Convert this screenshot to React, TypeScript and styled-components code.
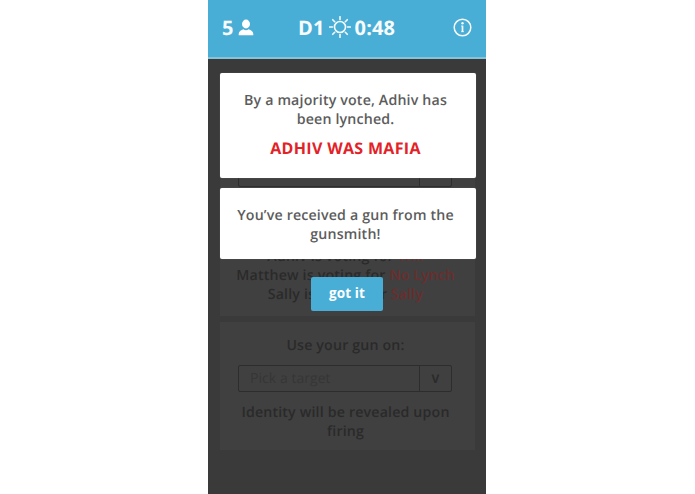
import React from "react";
import styled, { createGlobalStyle } from "styled-components";

const GlobalStyle = createGlobalStyle`
  * { box-sizing: border-box; }
  body { margin: 0; background: #fff; font-family: "Open Sans", "Noto Sans", sans-serif; text-rendering: geometricPrecision; }
`;

const Page = styled.div`
  display: flex;
  padding-left: 208px;
  height: 494px;
  overflow: hidden;
`;

const Phone = styled.main`
  position: relative;
  width: 278px;
  height: 494px;
  overflow: hidden;
  background: #3a3a3a;
`;

const Header = styled.header`
  display: grid;
  grid-template-columns: 76px 1fr 33px;
  align-items: center;
  height: 59px;
  padding: 0 0 2px 14px;
  background: #49aed6;
  border-bottom: 2px solid #87c3d8;
  color: #f7fbfd;
  font-size: 20px;
  font-weight: 700;
  line-height: 27px;
`;

const Players = styled.div`
  display: flex;
  align-items: center;
  gap: 5px;
`;

const Clock = styled.div`
  display: flex;
  align-items: center;
  gap: 4px;
  letter-spacing: 0.15px;
  svg { margin-top: -2px; }
`;

const Board = styled.div`
  display: flex;
  flex-direction: column;
  gap: 6px;
  padding: 14px 12px 0;
`;

const Panel = styled.section<{ $height: number; $top: number }>`
  width: 255px;
  height: ${(p) => p.$height}px;
  padding: ${(p) => p.$top}px 18px 0;
  background: #404040;
`;

const Line = styled.p`
  margin: 0 -12px;
  padding-right: 4px;
  color: #2a2a2a;
  font-size: 14.2px;
  font-weight: 600;
  line-height: 19px;
  letter-spacing: 0.17px;
  text-align: center;
  white-space: nowrap;
`;

const Target = styled.span`
  color: #6b2e2e;
`;

const Select = styled.div<{ $top?: number; $bottom: number }>`
  display: grid;
  grid-template-columns: 1fr 32px;
  width: 214px;
  height: 27px;
  margin-top: ${(p) => p.$top ?? 0}px;
  margin-bottom: ${(p) => p.$bottom}px;
  border: 1px solid #2d2d2d;
  border-radius: 2px;
  line-height: 25px;
`;

const Placeholder = styled.span`
  padding-left: 11px;
  color: #363636;
  font-size: 14px;
  letter-spacing: 0.05px;
`;

const Arrow = styled.span`
  border-left: 1px solid #2d2d2d;
  color: #2b2b2b;
  font-size: 12px;
  font-weight: 700;
  text-align: center;
`;

const Overlay = styled.div`
  position: absolute;
  top: 73px;
  left: 12px;
  width: 256px;
  display: flex;
  flex-direction: column;
  align-items: center;
`;

const Notice = styled.section<{ $height: number }>`
  width: 100%;
  height: ${(p) => p.$height}px;
  margin-bottom: 10px;
  padding: 18px 5px 0 0;
  border-radius: 2px;
  background: #fff;
  box-shadow: 0 0 1px #777;
`;

const Message = styled.p`
  margin: 0;
  color: #5c5c5c;
  font-size: 14.2px;
  font-weight: 600;
  line-height: 19px;
  letter-spacing: 0.17px;
  text-align: center;
`;

const Verdict = styled.strong`
  display: block;
  margin-top: 8px;
  color: #e32227;
  font-size: 16px;
  font-weight: 700;
  line-height: 22px;
  letter-spacing: 0.32px;
  text-align: center;
`;

const Confirm = styled.button`
  width: 72px;
  height: 34px;
  margin: 8px 2px 0 0;
  padding: 0 0 2px;
  border: 0;
  border-radius: 2px;
  background: #49aed6;
  color: #fff;
  font: 700 13.5px/20px "Open Sans", sans-serif;
  letter-spacing: 0.1px;
`;

const PersonIcon = () => (
  <svg width="16" height="17" viewBox="0 0 16 17" fill="#fff">
    <ellipse cx="8" cy="5" rx="4" ry="4.4" />
    <path d="M.7 16.2V15C.7 12.4 3 11 5.4 10.2Q8 12.2 10.6 10.2c2.4.8 4.7 2.2 4.7 4.8v1.2Z" />
  </svg>
);

const rays = [0, 45, 90, 135, 180, 225, 270, 315];

const SunIcon = () => (
  <svg width="22" height="22" viewBox="-11 -11 22 22" fill="none" stroke="#f7fbfd" strokeWidth="1.6">
    <circle r="5.5" />
    {rays.map((angle) => (
      <path key={angle} d="M0-7.5v-2.8" strokeLinecap="round" transform={`rotate(${angle})`} />
    ))}
  </svg>
);

const InfoIcon = () => (
  <svg width="19" height="19" viewBox="0 0 19 19" fill="none" stroke="#f7fbfd" strokeWidth="1.5">
    <circle cx="9.5" cy="9.5" r="8.3" />
    <circle cx="9.5" cy="5.3" r="1.2" fill="#f7fbfd" stroke="none" />
    <path d="M9.5 7.6v6.4" strokeWidth="1.7" />
    <path d="M8 8h1.5M8 13.7h3" strokeWidth=".7" />
  </svg>
);

export default function App() {
  return (
    <Page>
      <GlobalStyle />
      <Phone>
        <Header>
          <Players>5 <PersonIcon /></Players>
          <Clock><span>D1</span><SunIcon /><span>0:48</span></Clock>
          <InfoIcon />
        </Header>
        <Board>
          <Panel $height={243} $top={87}>
            <Select $bottom={60}>
              <Placeholder />
              <Arrow />
            </Select>
            <Line>Adhiv is voting for <Target>Will</Target></Line>
            <Line>Matthew is voting for <Target>No Lynch</Target></Line>
            <Line>Sally is voting for <Target>Sally</Target></Line>
          </Panel>
          <Panel $height={128} $top={14}>
            <Line>Use your gun on:</Line>
            <Select $top={10} $bottom={11}>
              <Placeholder>Pick a target</Placeholder>
              <Arrow>V</Arrow>
            </Select>
            <Line>Identity will be revealed upon<br />firing</Line>
          </Panel>
        </Board>
        <Overlay>
          <Notice $height={105}>
            <Message>By a majority vote, Adhiv has<br />been lynched.</Message>
            <Verdict>ADHIV WAS MAFIA</Verdict>
          </Notice>
          <Notice $height={71}>
            <Message>You’ve received a gun from the<br />gunsmith!</Message>
          </Notice>
          <Confirm>got it</Confirm>
        </Overlay>
      </Phone>
    </Page>
  );
}
